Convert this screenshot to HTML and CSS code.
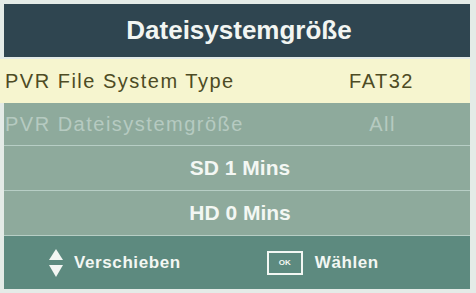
FILE: index.html
```html
<!DOCTYPE html>
<html lang="de">
<head>
<meta charset="utf-8">
<title>Dateisystemgröße</title>
<link rel="stylesheet" href="styles.css">
</head>
<body>
<div class="screen">
  <div class="header">Dateisystemgröße</div>
  <div class="row row-active">
    <span class="label">PVR File System Type</span>
    <span class="value value-fat">FAT32</span>
  </div>
  <div class="row row-disabled">
    <span class="label">PVR Dateisystemgröße</span>
    <span class="value value-all">All</span>
  </div>
  <div class="row row-info">SD 1 Mins</div>
  <div class="row row-info">HD 0 Mins</div>
  <div class="footer">
    <div class="hint hint-move">
      <svg class="arrows" width="16" height="32" viewBox="0 0 16 32">
        <polygon points="8,2 15,13 1,13" fill="#f3f6f3"/>
        <polygon points="1,18 15,18 8,30" fill="#f3f6f3"/>
      </svg>
      <span>Verschieben</span>
    </div>
    <div class="hint hint-ok">
      <span class="okbox">OK</span>
      <span>Wählen</span>
    </div>
  </div>
</div>
</body>
</html>
```

FILE: styles.css
```css
html, body {
  margin: 0;
  padding: 0;
}
body {
  width: 476px;
  height: 293px;
  background: #e4ebe7;
  font-family: "Liberation Sans", Arial, sans-serif;
  overflow: hidden;
}
.screen {
  padding: 4px 6px 0 0;
  display: flex;
  flex-direction: column;
}
.header {
  margin-left: 4px;
  height: 53px;
  background: #2f4550;
  color: #f2f5f2;
  font-weight: bold;
  font-size: 26px;
  display: flex;
  align-items: center;
  justify-content: center;
  padding-left: 4px;
}
.row {
  display: flex;
  align-items: center;
  height: 44px;
  box-sizing: border-box;
}
.row-active {
  margin-top: 2px;
  background: #f6f5cf;
  color: #4d4b24;
  font-size: 20px;
  letter-spacing: 1.5px;
  padding-left: 5px;
}
.row-disabled {
  margin-left: 4px;
  background: #8eaa9c;
  color: #b6cac1;
  font-size: 20px;
  letter-spacing: 1.5px;
  padding-left: 1px;
  height: 43px;
  border-bottom: 1px solid #b7cec5;
}
.value-fat {
  margin-left: auto;
  margin-right: 56px;
}
.value-all {
  margin-left: auto;
  margin-right: 74px;
}
.row-info {
  margin-left: 4px;
  background: #8eaa9c;
  color: #f3f7f3;
  font-weight: bold;
  font-size: 21px;
  justify-content: center;
  padding-left: 6px;
  border-bottom: 1px solid #b7cec5;
  height: 45px;
}
.footer {
  margin-left: 4px;
  height: 53px;
  background: #5d8a7f;
  display: flex;
  align-items: center;
  color: #f3f7f3;
  font-weight: bold;
  font-size: 17px;
  letter-spacing: 0.6px;
}
.hint {
  display: flex;
  align-items: center;
}
.hint-move {
  margin-left: 44px;
  gap: 10px;
}
.arrows {
  display: block;
}
.hint-ok {
  margin-left: 86px;
  gap: 12px;
}
.okbox {
  width: 32px;
  height: 20px;
  border: 2px solid #f3f7f3;
  font-size: 8px;
  letter-spacing: 0;
  display: flex;
  align-items: center;
  justify-content: center;
}
```
